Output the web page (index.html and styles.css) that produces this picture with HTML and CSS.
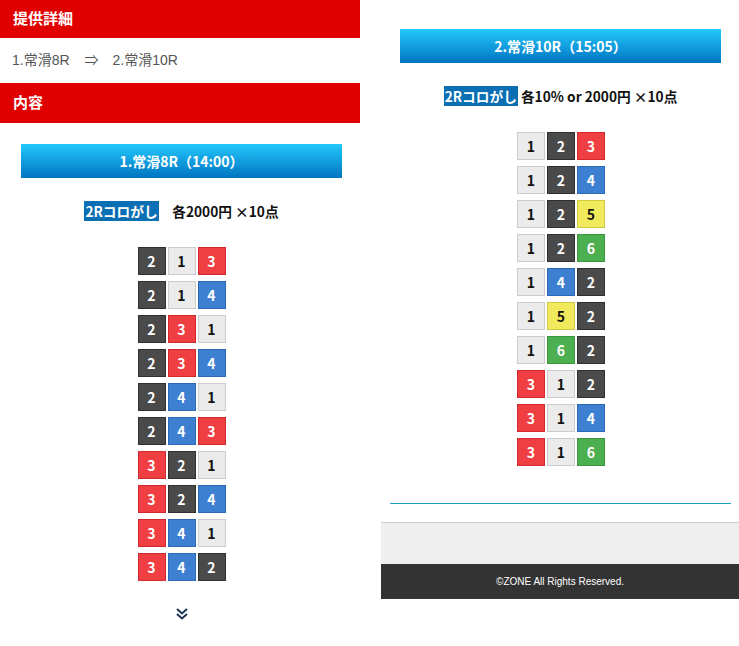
FILE: index.html
```html
<!DOCTYPE html>
<html lang="ja">
<head>
<meta charset="utf-8">
<link rel="stylesheet" href="styles.css">
</head>
<body>
<div class="page">
  <section class="col col-left">
    <h2 class="bar bar-top">提供詳細</h2>
    <p class="route">1.常滑8R<span class="arrow">⇒</span>2.常滑10R</p>
    <h2 class="bar bar-content">内容</h2>
    <div class="race">
      <div class="race-btn">1.常滑8R（14:00）</div>
      <p class="bet"><span class="tag">2Rコロがし</span>　各2000円 ×10点</p>
      <div class="combos">
        <div class="row"><span class="n n2">2</span><span class="n n1">1</span><span class="n n3">3</span></div>
        <div class="row"><span class="n n2">2</span><span class="n n1">1</span><span class="n n4">4</span></div>
        <div class="row"><span class="n n2">2</span><span class="n n3">3</span><span class="n n1">1</span></div>
        <div class="row"><span class="n n2">2</span><span class="n n3">3</span><span class="n n4">4</span></div>
        <div class="row"><span class="n n2">2</span><span class="n n4">4</span><span class="n n1">1</span></div>
        <div class="row"><span class="n n2">2</span><span class="n n4">4</span><span class="n n3">3</span></div>
        <div class="row"><span class="n n3">3</span><span class="n n2">2</span><span class="n n1">1</span></div>
        <div class="row"><span class="n n3">3</span><span class="n n2">2</span><span class="n n4">4</span></div>
        <div class="row"><span class="n n3">3</span><span class="n n4">4</span><span class="n n1">1</span></div>
        <div class="row"><span class="n n3">3</span><span class="n n4">4</span><span class="n n2">2</span></div>
      </div>
      <div class="more">
        <svg width="14" height="14" viewBox="0 0 14 14" aria-hidden="true">
          <path d="M2 2 L7 6.5 L12 2" fill="none" stroke="#1c3553" stroke-width="2"/>
          <path d="M2 7 L7 11.5 L12 7" fill="none" stroke="#1c3553" stroke-width="2"/>
        </svg>
      </div>
    </div>
  </section>
  <section class="col col-right">
    <div class="race race-right">
      <div class="race-btn">2.常滑10R（15:05）</div>
      <p class="bet"><span class="tag">2Rコロがし</span> 各10% or 2000円 ×10点</p>
      <div class="combos">
        <div class="row"><span class="n n1">1</span><span class="n n2">2</span><span class="n n3">3</span></div>
        <div class="row"><span class="n n1">1</span><span class="n n2">2</span><span class="n n4">4</span></div>
        <div class="row"><span class="n n1">1</span><span class="n n2">2</span><span class="n n5">5</span></div>
        <div class="row"><span class="n n1">1</span><span class="n n2">2</span><span class="n n6">6</span></div>
        <div class="row"><span class="n n1">1</span><span class="n n4">4</span><span class="n n2">2</span></div>
        <div class="row"><span class="n n1">1</span><span class="n n5">5</span><span class="n n2">2</span></div>
        <div class="row"><span class="n n1">1</span><span class="n n6">6</span><span class="n n2">2</span></div>
        <div class="row"><span class="n n3">3</span><span class="n n1">1</span><span class="n n2">2</span></div>
        <div class="row"><span class="n n3">3</span><span class="n n1">1</span><span class="n n4">4</span></div>
        <div class="row"><span class="n n3">3</span><span class="n n1">1</span><span class="n n6">6</span></div>
      </div>
    </div>
    <hr class="divider">
    <div class="gray-band"></div>
    <footer class="footer">©ZONE All Rights Reserved.</footer>
  </section>
</div>
</body>
</html>
```
FILE: styles.css
```css
* { box-sizing: border-box; }
html, body { margin: 0; padding: 0; background: #fff; }
body { font-family: "Noto Sans CJK JP", "Noto Sans", sans-serif; }

.page { display: flex; align-items: flex-start; }

.col-left { width: 360px; }
.col-right { width: 358px; margin-left: 21px; }

.bar {
  margin: 0;
  background: #e00000;
  color: #fff;
  font-size: 15px;
  font-weight: bold;
  padding-left: 13px;
}
.bar-top { height: 38px; line-height: 36px; }
.bar-content { height: 40px; line-height: 38px; }

.route {
  margin: 0;
  height: 45px;
  line-height: 45px;
  padding-left: 12px;
  font-family: "Liberation Sans", "Noto Sans CJK JP", sans-serif;
  font-size: 14px;
  color: #555;
}
.arrow { margin: 0 14px 0 15px; }

.race { margin-left: 21px; width: 321px; padding-top: 21px; }
.race-right { margin-left: 19px; padding-top: 29px; }

.race-btn {
  height: 34px;
  line-height: 34px;
  text-align: center;
  color: #fff;
  font-size: 14px;
  font-weight: bold;
  background: linear-gradient(#24c9fc, #0074c1);
}

.bet {
  margin: 23px 0 0;
  line-height: 21px;
  text-align: center;
  font-size: 13.7px;
  font-weight: bold;
  color: #111;
}
.tag { background: #0a6fb3; color: #fff; padding: 0 1px; }

.combos {
  margin-top: 25px;
  display: flex;
  flex-direction: column;
  align-items: center;
  gap: 6px;
  padding-left: 0;
}
.race-right .combos { padding-left: 1px; }
.row { display: flex; gap: 2px; }

.n {
  width: 28px;
  height: 28px;
  display: flex;
  align-items: center;
  justify-content: center;
  font-size: 14px;
  font-weight: bold;
  color: #fff;
  border: 1px solid;
}
.n1 { background: #ebebeb; border-color: #cccccc; color: #111; }
.n2 { background: #4a4a4a; border-color: #2f2f2f; }
.n3 { background: #ef3f42; border-color: #d02a2e; }
.n4 { background: #3d80d2; border-color: #2c69b3; }
.n5 { background: #f0ea5c; border-color: #cfc843; color: #111; }
.n6 { background: #4caf50; border-color: #3b963f; }

.more { display: flex; justify-content: center; margin-top: 26px; }
.more svg { display: block; }

.divider {
  margin: 37px 8px 0 9px;
  border: 0;
  border-top: 1px solid #1ea0c8;
  height: 0;
}
.gray-band {
  margin-top: 18px;
  height: 42px;
  background: #efefef;
  border-top: 1px solid #cfcfcf;
}
.footer {
  height: 35px;
  line-height: 35px;
  background: #333;
  color: #fff;
  text-align: center;
  font-family: "Liberation Sans", Arial, sans-serif;
  font-size: 10px;
}
```
